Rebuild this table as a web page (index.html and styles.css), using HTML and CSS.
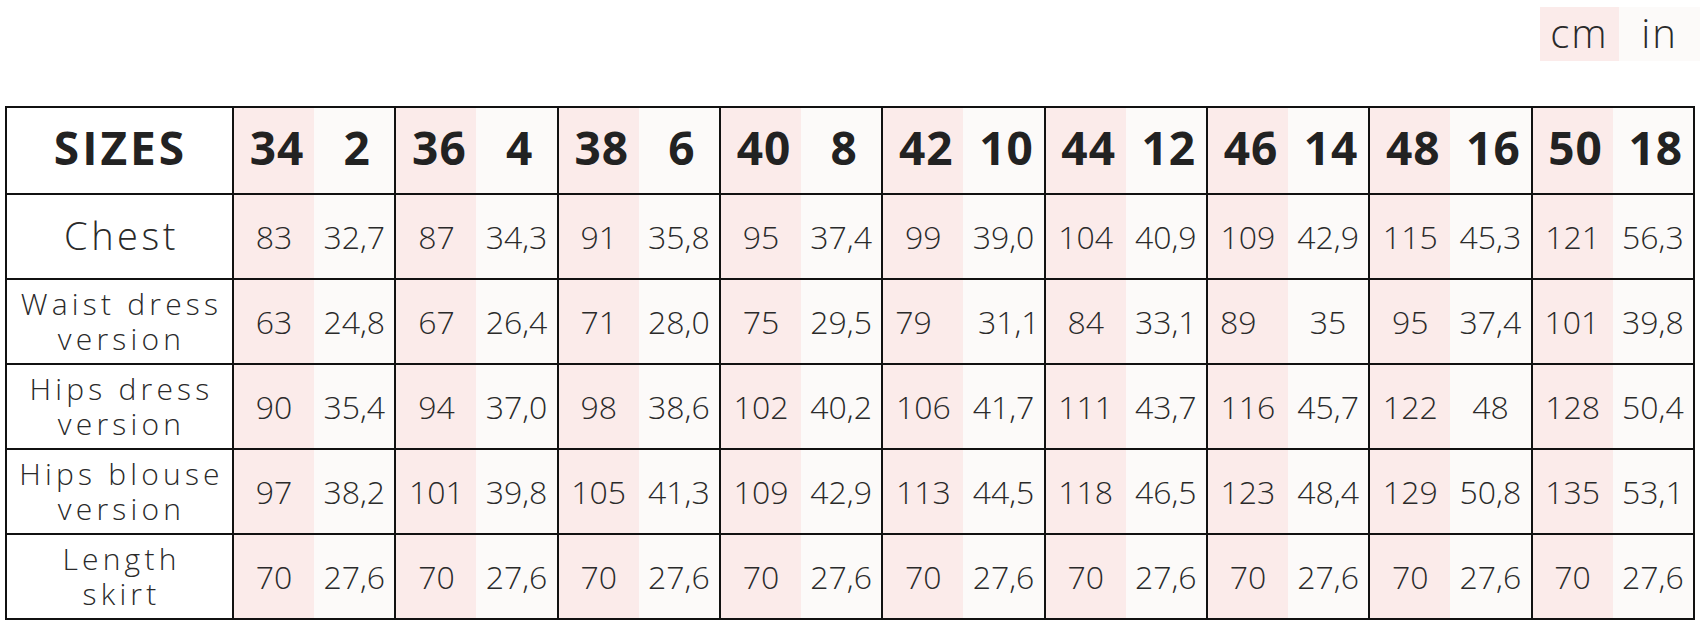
FILE: index.html
```html
<!DOCTYPE html>
<html lang="en">
<head>
<meta charset="utf-8">
<title>Size chart</title>
<link rel="stylesheet" href="styles.css">
</head>
<body>
<div class="page">
  <div class="units">
    <span class="unit unit-cm">cm</span>
    <span class="unit unit-in">in</span>
  </div>
  <table class="chart">
    <colgroup>
      <col class="col-label">
    </colgroup>
    <thead>
      <tr class="row-head">
        <th class="label">SIZES</th>
        <th class="cm">34</th><th class="in">2</th>
        <th class="cm">36</th><th class="in">4</th>
        <th class="cm">38</th><th class="in">6</th>
        <th class="cm">40</th><th class="in">8</th>
        <th class="cm">42</th><th class="in">10</th>
        <th class="cm">44</th><th class="in">12</th>
        <th class="cm">46</th><th class="in">14</th>
        <th class="cm">48</th><th class="in">16</th>
        <th class="cm">50</th><th class="in">18</th>
      </tr>
    </thead>
    <tbody>
      <tr>
        <td class="label label-big">Chest</td>
        <td class="cm">83</td><td class="in">32,7</td>
        <td class="cm">87</td><td class="in">34,3</td>
        <td class="cm">91</td><td class="in">35,8</td>
        <td class="cm">95</td><td class="in">37,4</td>
        <td class="cm">99</td><td class="in">39,0</td>
        <td class="cm">104</td><td class="in">40,9</td>
        <td class="cm">109</td><td class="in">42,9</td>
        <td class="cm">115</td><td class="in">45,3</td>
        <td class="cm">121</td><td class="in">56,3</td>
      </tr>
      <tr>
        <td class="label">Waist dress<br>version</td>
        <td class="cm">63</td><td class="in">24,8</td>
        <td class="cm">67</td><td class="in">26,4</td>
        <td class="cm">71</td><td class="in">28,0</td>
        <td class="cm">75</td><td class="in">29,5</td>
        <td class="cm start">79</td><td class="in end">31,1</td>
        <td class="cm">84</td><td class="in">33,1</td>
        <td class="cm start">89</td><td class="in">35</td>
        <td class="cm">95</td><td class="in">37,4</td>
        <td class="cm start">101</td><td class="in">39,8</td>
      </tr>
      <tr>
        <td class="label">Hips dress<br>version</td>
        <td class="cm">90</td><td class="in">35,4</td>
        <td class="cm">94</td><td class="in">37,0</td>
        <td class="cm">98</td><td class="in">38,6</td>
        <td class="cm">102</td><td class="in">40,2</td>
        <td class="cm">106</td><td class="in">41,7</td>
        <td class="cm">111</td><td class="in">43,7</td>
        <td class="cm">116</td><td class="in">45,7</td>
        <td class="cm">122</td><td class="in">48</td>
        <td class="cm">128</td><td class="in">50,4</td>
      </tr>
      <tr>
        <td class="label">Hips blouse<br>version</td>
        <td class="cm">97</td><td class="in">38,2</td>
        <td class="cm">101</td><td class="in">39,8</td>
        <td class="cm">105</td><td class="in">41,3</td>
        <td class="cm">109</td><td class="in">42,9</td>
        <td class="cm">113</td><td class="in">44,5</td>
        <td class="cm">118</td><td class="in">46,5</td>
        <td class="cm">123</td><td class="in">48,4</td>
        <td class="cm">129</td><td class="in">50,8</td>
        <td class="cm">135</td><td class="in">53,1</td>
      </tr>
      <tr>
        <td class="label">Length<br>skirt</td>
        <td class="cm">70</td><td class="in">27,6</td>
        <td class="cm">70</td><td class="in">27,6</td>
        <td class="cm">70</td><td class="in">27,6</td>
        <td class="cm">70</td><td class="in">27,6</td>
        <td class="cm">70</td><td class="in">27,6</td>
        <td class="cm">70</td><td class="in">27,6</td>
        <td class="cm">70</td><td class="in">27,6</td>
        <td class="cm">70</td><td class="in">27,6</td>
        <td class="cm">70</td><td class="in">27,6</td>
      </tr>
    </tbody>
  </table>
</div>
</body>
</html>
```

FILE: styles.css
```css
html, body {
  margin: 0;
  padding: 0;
  background: #ffffff;
}

body {
  font-family: "Open Sans", "Liberation Sans", sans-serif;
  color: #222222;
}

.page {
  width: 1700px;
  padding: 0 0 0 5px;
  box-sizing: border-box;
}

.units {
  display: flex;
  justify-content: flex-end;
  align-items: stretch;
  height: 106px;
  padding-top: 7px;
  box-sizing: border-box;
}

.unit {
  display: flex;
  align-items: center;
  justify-content: center;
  height: 54px;
  font-size: 40px;
  font-weight: 300;
  letter-spacing: 2px;
  color: #2a2a2a;
  padding-bottom: 4px;
  box-sizing: border-box;
}

.unit-cm {
  width: 79px;
  background: #fbebea;
}

.unit-in {
  width: 81px;
  background: #fcfaf9;
}

.chart {
  width: 1690px;
  table-layout: fixed;
  border-collapse: collapse;
  border: 2px solid #111111;
}

.col-label {
  width: 227px;
}

.chart th,
.chart td {
  padding: 0;
  text-align: center;
  vertical-align: middle;
  border-top: 2px solid #111111;
  border-bottom: 2px solid #111111;
  height: 81px;
  white-space: nowrap;
}

.row-head th {
  height: 77px;
  font-weight: 700;
  font-size: 46px;
  letter-spacing: 1px;
  color: #222222;
  padding: 0 0 8px 6px;
}

.chart td {
  font-size: 32px;
  font-weight: 300;
  color: #2a2a2a;
}

.label {
  background: #ffffff;
  border-right: 2px solid #111111;
}

.chart td.label {
  font-size: 30px;
  line-height: 35px;
  letter-spacing: 4.2px;
  padding: 0 0 2px 4px;
}

.chart td.label-big {
  font-size: 38px;
  letter-spacing: 3.5px;
}

.row-head th.label {
  letter-spacing: 3px;
  padding-left: 2px;
}

.cm {
  background: #fbebea;
}

.in {
  background: #fcfaf9;
  border-right: 2px solid #111111;
}

.chart td.start {
  text-align: left;
  padding-left: 12px;
}

.chart td.end {
  text-align: right;
  padding-right: 4px;
}
```
